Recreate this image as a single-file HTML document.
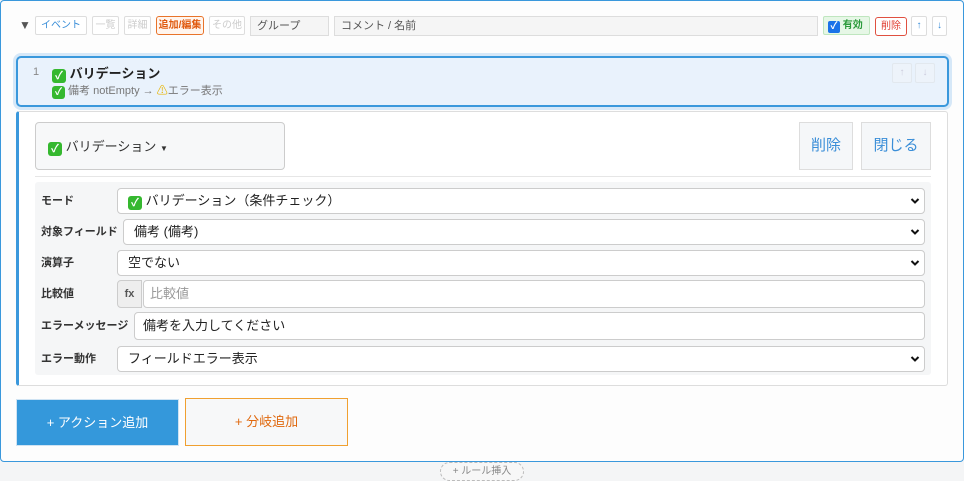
<!DOCTYPE html>
<html><head><meta charset="utf-8"><style>
*{box-sizing:border-box;margin:0;padding:0}
body{width:964px;height:481px;background:#f4f5f6;font-family:"Liberation Sans","Noto Sans CJK JP",sans-serif;position:relative;overflow:hidden;color:#333}
.a{position:absolute}
.outer{left:0;top:0;width:964px;height:462px;border:1px solid #3a98dc;border-radius:4px;background:#fdfdfd}
.btn{position:absolute;border:1px solid #ddd;border-radius:2px;font-size:10px;text-align:center;line-height:17px;background:#fff}
.inp{position:absolute;border:1px solid #ddd;background:#f5f5f5;font-size:11px;color:#555;padding-left:6px;line-height:18px}
.chk{display:inline-block;width:14px;height:14px;background:#35b82f;border-radius:3px;color:#fff;font-size:11px;line-height:14px;text-align:center;font-weight:bold;vertical-align:-1px}
.lbl{position:absolute;left:41px;font-size:11px;font-weight:bold;color:#333}
.sel{position:absolute;border:1px solid #ccc;border-radius:4px;background:#fff;font-size:13px;line-height:23px;padding-left:10px;color:#222}
.sel svg{position:absolute;right:4px;top:8px}
</style></head><body>
<div class="a outer"></div>
<div class="a" style="left:19px;top:18px;font-size:12px;color:#555">▼</div>
<div class="btn" style="left:35px;top:16px;width:52px;color:#3a8ed8">イベント</div>
<div class="btn" style="left:92px;top:16px;width:27px;color:#ccc">一覧</div>
<div class="btn" style="left:124px;top:16px;width:27px;color:#ccc">詳細</div>
<div class="btn" style="left:156px;top:16px;width:48px;color:#e05a10;border-color:#e8732a;border-radius:3px;font-weight:bold;background:#fff5ee">追加/編集</div>
<div class="btn" style="left:209px;top:16px;width:36px;color:#ccc">その他</div>
<div class="inp" style="left:250px;top:16px;width:79px;height:20px">グループ</div>
<div class="inp" style="left:334px;top:16px;width:484px;height:20px">コメント / 名前</div>
<div class="btn" style="left:823px;top:16px;width:47px;background:#e6f7e6;border-color:#bfe6bf;color:#2a9a3a;font-weight:bold;text-align:left;padding-left:4px"><span style="display:inline-block;width:12px;height:12px;background:#1a73e8;border-radius:2px;color:#fff;font-size:10px;line-height:12px;text-align:center;vertical-align:-1px">✓</span> 有効</div>
<div class="btn" style="left:875px;top:17px;width:32px;color:#e03c30;border-color:#e05040;border-radius:3px">削除</div>
<div class="btn" style="left:911px;top:16px;width:16px;color:#3a8ed8;height:20px">↑</div>
<div class="btn" style="left:932px;top:16px;width:15px;color:#3a8ed8;height:20px">↓</div>

<div class="a" style="left:16px;top:56px;width:933px;height:51px;border:2px solid #3a98dc;border-radius:5px;background:#e9f2fc;box-shadow:0 0 0 3px #d6e8f8"></div>
<div class="a" style="left:33px;top:66px;font-size:11px;color:#888">1</div>
<div class="a" style="left:52px;top:63px;font-size:13px;font-weight:bold;color:#222"><span class="chk">✓</span> バリデーション</div>
<div class="a" style="left:52px;top:82px;font-size:11px;color:#777"><span class="chk" style="width:13px;height:13px;line-height:13px;font-size:10px">✓</span> 備考 notEmpty → <span style="color:#e8b400">⚠</span>エラー表示</div>
<div class="btn" style="left:892px;top:63px;width:20px;height:20px;border-color:#e2e8ee;background:#edf3fa;color:#ccd">↑</div>
<div class="btn" style="left:915px;top:63px;width:20px;height:20px;border-color:#e2e8ee;background:#edf3fa;color:#ccd">↓</div>

<div class="a" style="left:16px;top:111px;width:932px;height:275px;border:1px solid #ddd;border-left:3px solid #3a98dc;border-radius:3px;background:#fff"></div>
<div class="a" style="left:35px;top:122px;width:250px;height:48px;border:1px solid #ccc;border-radius:4px;background:#f7f8f9;font-size:13px;padding:13px 0 0 12px;color:#333"><span class="chk">✓</span> バリデーション <span style="font-size:8px">▼</span></div>
<div class="a" style="left:799px;top:122px;width:54px;height:48px;border:1px solid #ddd;background:#f5f7f9;color:#3a8ed8;font-size:15px;text-align:center;line-height:46px">削除</div>
<div class="a" style="left:861px;top:122px;width:70px;height:48px;border:1px solid #ddd;background:#f5f7f9;color:#3a8ed8;font-size:15px;text-align:center;line-height:46px">閉じる</div>
<div class="a" style="left:35px;top:176px;width:896px;height:1px;background:#e6e6e6"></div>
<div class="a" style="left:35px;top:182px;width:896px;height:193px;background:#f5f6f7;border-radius:3px"></div>

<div class="lbl" style="top:192px">モード</div>
<div class="sel" style="left:117px;top:188px;width:808px;height:26px"><span class="chk">✓</span> バリデーション（条件チェック）<svg width="10" height="8" viewBox="0 0 10 8"><path d="M1.5 2l3.5 3.5L8.5 2" stroke="#111" stroke-width="2" fill="none"/></svg></div>
<div class="lbl" style="top:223px">対象フィールド</div>
<div class="sel" style="left:123px;top:219px;width:802px;height:26px">備考 (備考)<svg width="10" height="8" viewBox="0 0 10 8"><path d="M1.5 2l3.5 3.5L8.5 2" stroke="#111" stroke-width="2" fill="none"/></svg></div>
<div class="lbl" style="top:254px">演算子</div>
<div class="sel" style="left:117px;top:250px;width:808px;height:26px">空でない<svg width="10" height="8" viewBox="0 0 10 8"><path d="M1.5 2l3.5 3.5L8.5 2" stroke="#111" stroke-width="2" fill="none"/></svg></div>
<div class="lbl" style="top:285px">比較値</div>
<div class="a" style="left:117px;top:280px;width:25px;height:28px;border:1px solid #ccc;border-radius:4px 0 0 4px;background:#eee;font-size:11px;font-weight:bold;text-align:center;line-height:26px;color:#555">fx</div>
<div class="sel" style="left:143px;top:280px;width:782px;height:28px;line-height:26px;padding-left:6px;color:#999">比較値</div>
<div class="lbl" style="top:317px">エラーメッセージ</div>
<div class="sel" style="left:134px;top:312px;width:791px;height:28px;line-height:26px;padding-left:8px">備考を入力してください</div>
<div class="lbl" style="top:350px">エラー動作</div>
<div class="sel" style="left:117px;top:346px;width:808px;height:26px">フィールドエラー表示<svg width="10" height="8" viewBox="0 0 10 8"><path d="M1.5 2l3.5 3.5L8.5 2" stroke="#111" stroke-width="2" fill="none"/></svg></div>

<div class="a" style="left:16px;top:399px;width:163px;height:47px;background:#3498db;border:1px solid #cfe3f3;color:#fff;font-size:13px;text-align:center;line-height:45px">+ アクション追加</div>
<div class="a" style="left:185px;top:398px;width:163px;height:48px;background:#f7f8f9;border:1px solid #f0a030;color:#e06a10;font-size:13px;text-align:center;line-height:46px">+ 分岐追加</div>
<div class="a" style="left:440px;top:462px;width:84px;height:19px;border:1px dashed #bbb;border-radius:10px;font-size:10px;color:#888;text-align:center;line-height:17px;background:#f7f7f7">+ ルール挿入</div>
</body></html>
